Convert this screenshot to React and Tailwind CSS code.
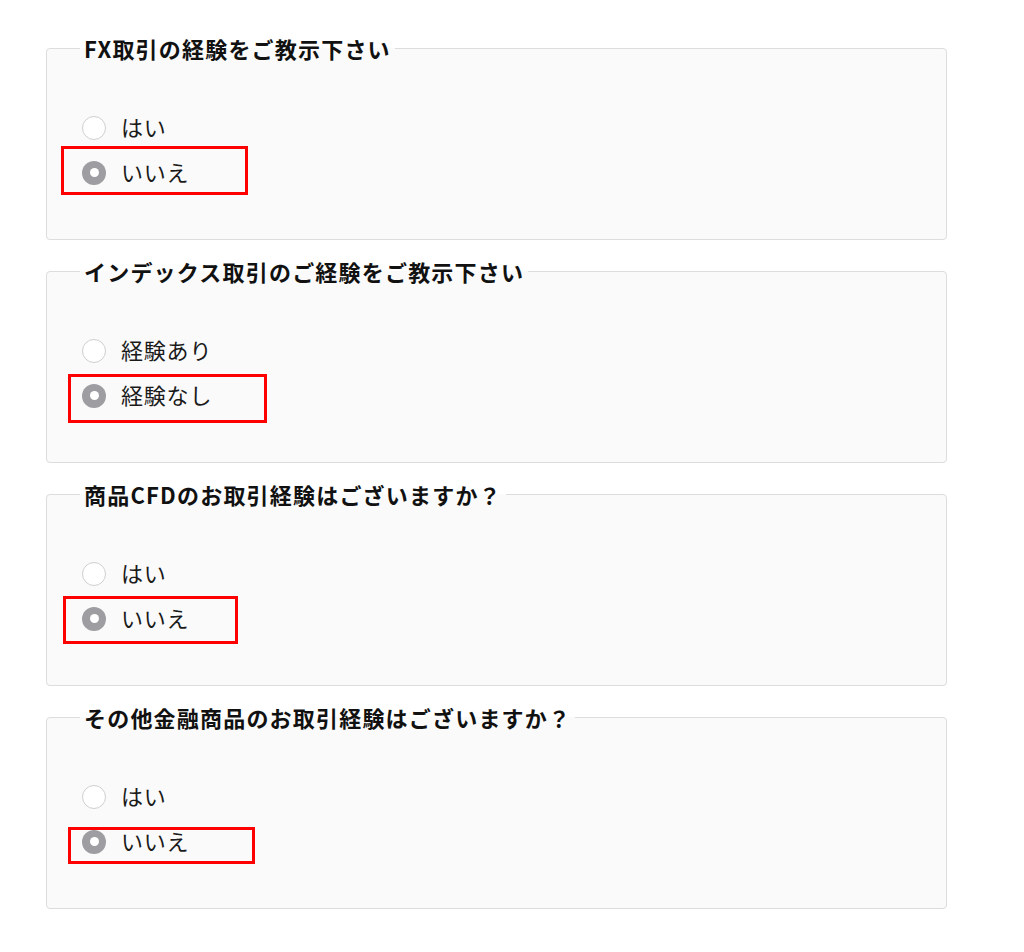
const QUESTIONS = [
  {
    title: 'FX取引の経験をご教示下さい',
    options: ['はい', 'いいえ'],
    mark: 'left-[-21px] top-[41px] w-[187px] h-[49px]',
  },
  {
    title: 'インデックス取引のご経験をご教示下さい',
    options: ['経験あり', '経験なし'],
    mark: 'left-[-14px] top-[46px] w-[199px] h-[49px]',
  },
  {
    title: '商品CFDのお取引経験はございますか？',
    options: ['はい', 'いいえ'],
    mark: 'left-[-19px] top-[45px] w-[175px] h-[48px]',
  },
  {
    title: 'その他金融商品のお取引経験はございますか？',
    options: ['はい', 'いいえ'],
    mark: 'left-[-14px] top-[53px] w-[187px] h-[37px]',
  },
]

function Radio({ checked }) {
  if (checked) {
    return (
      <span className="flex items-center justify-center w-[24px] h-[24px] rounded-full bg-[#9d9da2] shrink-0">
        <span className="w-[9px] h-[9px] rounded-full bg-white" />
      </span>
    )
  }
  return <span className="w-[24px] h-[24px] rounded-full border border-[#cfcfcf] bg-white shrink-0" />
}

function Question({ title, options, mark }) {
  return (
    <fieldset className="w-[901px] border border-[#dddddd] rounded-[4px] bg-[#fafafa] px-[33px] pb-[44px]">
      <legend className="px-[4px] text-[22px] leading-[22px] font-bold tracking-[1.2px] text-[#111111]">
        {title}
      </legend>
      <div className="relative ml-[2px] mt-[46px]">
        {options.map((opt, i) => (
          <label key={opt} className="flex items-center gap-[15px] h-[45px]">
            <Radio checked={i === 1} />
            <span className="pb-[4px] text-[22px] leading-none tracking-[0.8px] text-[#1a1a1a]">{opt}</span>
          </label>
        ))}
        {/* annotation frame around the chosen answer */}
        <div className={`absolute border-[3px] border-[#ff0000] ${mark}`} />
      </div>
    </fieldset>
  )
}

export default function App() {
  return (
    <div
      className="min-h-[952px] bg-white pt-[37px] pl-[46px] flex flex-col gap-[20px]"
      style={{ fontFamily: '"Noto Sans CJK JP", "Noto Sans", sans-serif' }}
    >
      {QUESTIONS.map((q) => (
        <Question key={q.title} {...q} />
      ))}
    </div>
  )
}
